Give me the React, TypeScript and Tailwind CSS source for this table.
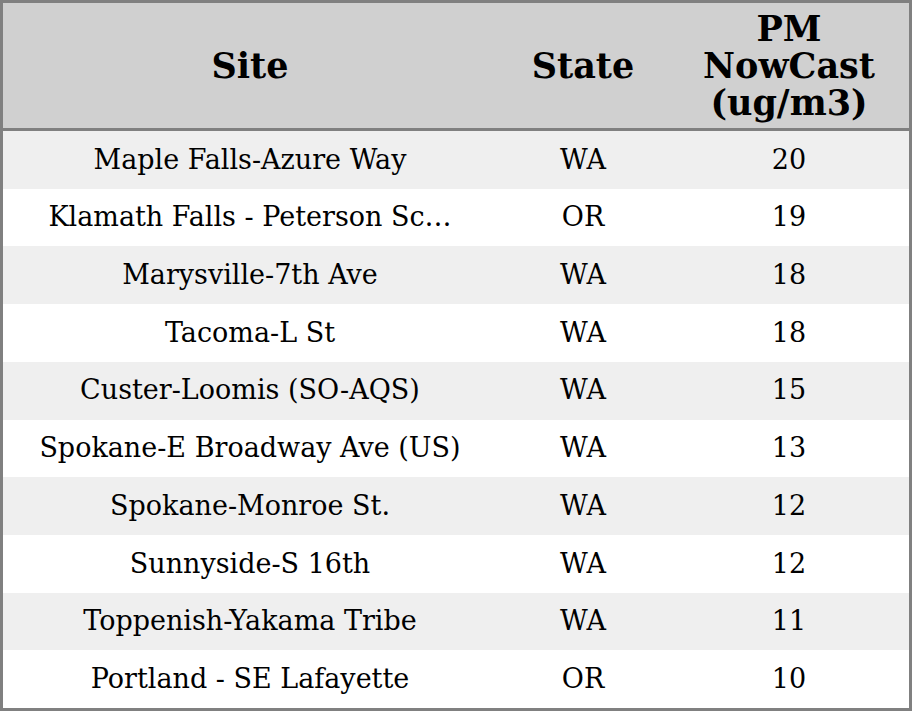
import React from 'react';

const rows = [
  { site: 'Maple Falls-Azure Way', state: 'WA', pm: 20 },
  { site: 'Klamath Falls - Peterson Sc…', state: 'OR', pm: 19 },
  { site: 'Marysville-7th Ave', state: 'WA', pm: 18 },
  { site: 'Tacoma-L St', state: 'WA', pm: 18 },
  { site: 'Custer-Loomis (SO-AQS)', state: 'WA', pm: 15 },
  { site: 'Spokane-E Broadway Ave (US)', state: 'WA', pm: 13 },
  { site: 'Spokane-Monroe St.', state: 'WA', pm: 12 },
  { site: 'Sunnyside-S 16th', state: 'WA', pm: 12 },
  { site: 'Toppenish-Yakama Tribe', state: 'WA', pm: 11 },
  { site: 'Portland - SE Lafayette', state: 'OR', pm: 10 },
];

const App: React.FC = () => {
  return (
    <div className="w-[912px] h-[711px] border-[3px] border-[#808080] flex flex-col text-black font-['DejaVu_Serif',serif]">
      <div className="h-[128px] shrink-0 grid grid-cols-[494px_172px_1fr] items-center bg-[#d0d0d0] border-b-[3px] border-[#808080] text-[35px] font-bold leading-[37px] text-center">
        <div>Site</div>
        <div>State</div>
        <div>
          PM
          <br />
          NowCast
          <br />
          (ug/m3)
        </div>
      </div>
      <div className="flex-1 flex flex-col">
        {rows.map((r, i) => (
          <div
            key={r.site}
            className={`flex-1 grid grid-cols-[494px_172px_1fr] items-center text-center text-[27px] ${i % 2 === 0 ? 'bg-[#efefef]' : 'bg-white'}`}
          >
            <div className="whitespace-nowrap">{r.site}</div>
            <div>{r.state}</div>
            <div>{r.pm}</div>
          </div>
        ))}
      </div>
    </div>
  );
};

export default App;
